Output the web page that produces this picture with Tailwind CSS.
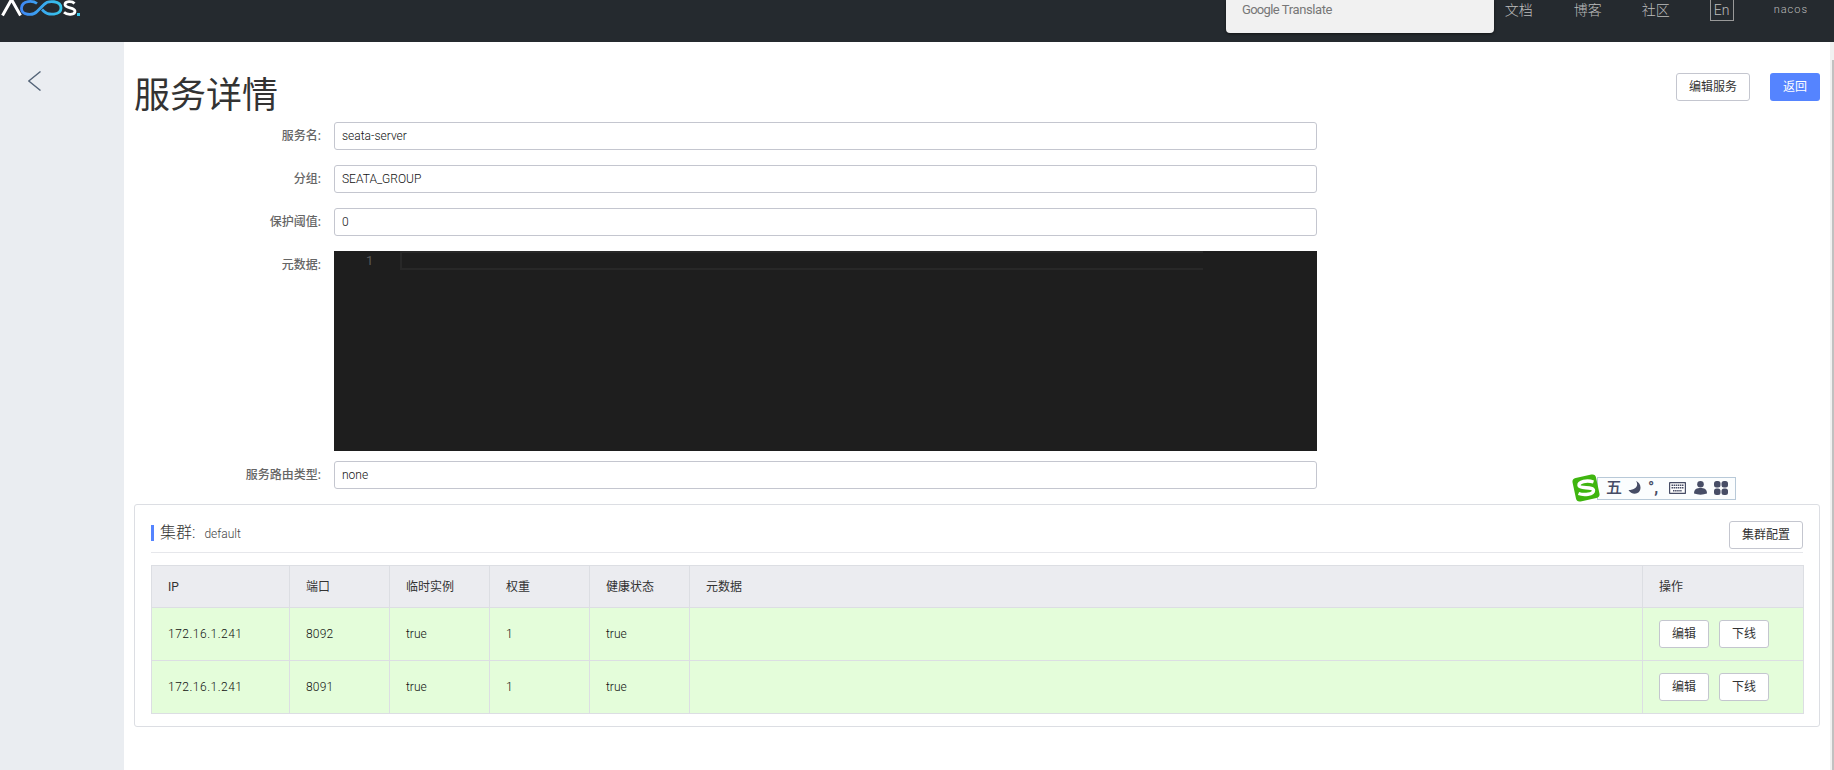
<!DOCTYPE html>
<html lang="zh-CN" class="overflow-hidden">
<head>
    <meta charset="UTF-8">
    <title>Nacos - 服务详情</title>
    <script src="https://cdn.jsdelivr.net/npm/@tailwindcss/browser@4"></script>
</head>

<body class="relative h-[770px] overflow-hidden bg-white text-xs text-[#333] font-['Roboto','Noto_Sans_CJK_SC',sans-serif]">

<!-- Header -->
<header class="relative flex h-[42px] items-start bg-[#252a2f] text-[#bdbdbd]">
    <!-- Logo -->
    <svg class="block" width="84" height="18" viewBox="0 0 84 18" fill="none">
        <defs>
            <linearGradient id="logoGrad" x1="20" y1="0" x2="62" y2="0" gradientUnits="userSpaceOnUse">
                <stop offset="0" stop-color="#3f86f5"/>
                <stop offset="1" stop-color="#36c6ea"/>
            </linearGradient>
        </defs>
        <path d="M2.500 15.500 L11.500 -0.500 L20.500 15.500" stroke="#fff" stroke-width="3"/>
        <path d="M37 3.500 C33 0.500 22 0 21.500 8 C21 15.500 33 16 37 11.500 L44 4.500 C48 0 61 0.500 61 8 C61 15.500 48 15.500 44 11.500 L42 9.500" stroke="url(#logoGrad)" stroke-width="2.800"/>
        <path d="M74.500 3.500 C72 0.800 65 1 65 4.600 C65 9 75 6.800 75 11.300 C75 15.200 67 15.200 64 12.300" stroke="#fff" stroke-width="2.800"/>
        <rect x="77" y="13" width="3" height="3" fill="#36c6ea"/>
    </svg>

    <!-- Nav -->
    <nav class="ml-auto flex items-start pr-[26px]">
        <a class="mt-[1px] text-sm leading-[18px] font-light">文档</a>
        <a class="ml-[41px] mt-[1px] text-sm leading-[18px] font-light">博客</a>
        <a class="ml-[40px] mt-[1px] text-sm leading-[18px] font-light">社区</a>
        <span class="ml-[40px] flex h-[21px] w-[24px] items-center justify-center border border-t-0 border-[#999] text-sm font-light">En</span>
        <span class="ml-[40px] mt-[1px] text-[11px] leading-[18px] font-light tracking-[1px]">nacos</span>
    </nav>

    <!-- Google translate panel -->
    <div class="absolute left-[1226px] top-0 flex h-[33px] w-[268px] items-start rounded-b bg-[#f1f1f1] pl-[16px] text-[13px] leading-[19px] text-[#777] shadow-[0_1px_3px_rgba(0,0,0,0.5)]">
        <span class="tracking-[-0.7px]">Google</span><span class="ml-[3px] tracking-[-0.4px]">Translate</span>
    </div>
</header>

<div class="flex h-[728px] overflow-hidden">
    <!-- Sidebar -->
    <aside class="w-[124px] shrink-0 bg-[#eaedf1] pl-[28px] pt-[29px]">
        <svg class="block" width="13" height="20" viewBox="0 0 13 20" fill="none">
            <path d="M12.500 0.500 L0.800 10 L12.500 19.500" stroke="#546478" stroke-width="1.400"/>
        </svg>
    </aside>

    <!-- Main -->
    <main class="min-w-0 flex-1 px-[10px] pt-[31px]">
        <div class="flex h-[49px] items-start justify-between">
            <h1 class="mt-[1px] text-4xl leading-[44px] font-normal text-[#333]">服务详情</h1>
            <div class="flex gap-[20px]">
                <button class="h-[28px] w-[74px] rounded-[3px] border border-[#c4c6cf] bg-white">编辑服务</button>
                <button class="h-[28px] w-[50px] rounded-[3px] bg-[#5584ff] text-white">返回</button>
            </div>
        </div>

        <!-- Form -->
        <form class="w-[1183px]">
            <div class="mb-[15px] flex items-center">
                <label class="w-[188px] pr-[1px] text-right font-medium text-[#666]">服务名:</label>
                <input class="ml-[12px] h-[28px] flex-1 rounded-[3px] border border-[#c4c6cf] px-[7px] font-light text-[#111]" value="seata-server" readonly>
            </div>
            <div class="mb-[15px] flex items-center">
                <label class="w-[188px] pr-[1px] text-right font-medium text-[#666]">分组:</label>
                <input class="ml-[12px] h-[28px] flex-1 rounded-[3px] border border-[#c4c6cf] px-[7px] font-light text-[#111]" value="SEATA_GROUP" readonly>
            </div>
            <div class="mb-[15px] flex items-center">
                <label class="w-[188px] pr-[1px] text-right font-medium text-[#666]">保护阈值:</label>
                <input class="ml-[12px] h-[28px] flex-1 rounded-[3px] border border-[#c4c6cf] px-[7px] font-light text-[#111]" value="0" readonly>
            </div>
            <div class="mb-[10px] flex items-start">
                <label class="w-[188px] pr-[1px] pt-[6px] text-right font-medium text-[#666]">元数据:</label>
                <!-- Editor -->
                <div class="ml-[12px] flex h-[200px] flex-1 items-start bg-[#1e1e1e]">
                    <span class="w-[66px] pl-[32px] text-[13px] leading-[19px] text-[#5a5a5a]">1</span>
                    <div class="h-[19px] w-[803px] border-y-2 border-l-2 border-[#282828]"></div>
                </div>
            </div>
            <div class="flex items-center">
                <label class="w-[188px] pr-[1px] text-right font-medium text-[#666]">服务路由类型:</label>
                <input class="ml-[12px] h-[28px] flex-1 rounded-[3px] border border-[#c4c6cf] px-[7px] font-light text-[#111]" value="none" readonly>
            </div>
        </form>

        <!-- Cluster card -->
        <section class="mt-[15px] h-[223px] rounded-[3px] border border-[#dcdee3] px-[16px] pt-[16px]">
            <div class="flex h-[32px] items-start justify-between border-b border-[#e6e7eb]">
                <div class="mt-[4px] flex h-[16px] items-center border-l-[3px] border-[#5584ff] pl-[6px]">
                    <span class="text-base font-light text-[#333]">集群:</span>
                    <span class="ml-[9px] mt-[2px] font-light text-[#444]">default</span>
                </div>
                <button class="h-[28px] w-[74px] rounded-[3px] border border-[#c4c6cf] bg-white">集群配置</button>
            </div>

            <table class="mt-[12px] w-[1652px] table-fixed border-collapse">
                <colgroup>
                    <col class="w-[138px]"><col class="w-[100px]"><col class="w-[100px]"><col class="w-[100px]"><col class="w-[100px]"><col class="w-[953px]"><col class="w-[161px]">
                </colgroup>
                <thead>
                    <tr class="h-[42px] bg-[#ebecf0] text-left">
                        <th class="border border-[#dcdee3] pl-[16px] font-normal">IP</th>
                        <th class="border border-[#dcdee3] pl-[16px] font-normal">端口</th>
                        <th class="border border-[#dcdee3] pl-[16px] font-normal">临时实例</th>
                        <th class="border border-[#dcdee3] pl-[16px] font-normal">权重</th>
                        <th class="border border-[#dcdee3] pl-[16px] font-normal">健康状态</th>
                        <th class="border border-[#dcdee3] pl-[16px] font-normal">元数据</th>
                        <th class="border border-[#dcdee3] pl-[16px] font-normal">操作</th>
                    </tr>
                </thead>
                <tbody class="font-light text-[#111]">
                    <tr class="h-[53px] bg-[#e4fdda]">
                        <td class="border border-[#dcdee3] pl-[16px] tracking-[0.5px]">172.16.1.241</td>
                        <td class="border border-[#dcdee3] pl-[16px] tracking-[0.2px]">8092</td>
                        <td class="border border-[#dcdee3] pl-[16px]">true</td>
                        <td class="border border-[#dcdee3] pl-[16px]">1</td>
                        <td class="border border-[#dcdee3] pl-[16px]">true</td>
                        <td class="border border-[#dcdee3] pl-[16px]"></td>
                        <td class="border border-[#dcdee3] pl-[16px]">
                            <div class="flex gap-[10px] font-normal text-[#333]">
                                <button class="h-[28px] w-[50px] rounded-[3px] border border-[#c4c6cf] bg-white">编辑</button>
                                <button class="h-[28px] w-[50px] rounded-[3px] border border-[#c4c6cf] bg-white">下线</button>
                            </div>
                        </td>
                    </tr>
                    <tr class="h-[53px] bg-[#e4fdda]">
                        <td class="border border-[#dcdee3] pl-[16px] tracking-[0.5px]">172.16.1.241</td>
                        <td class="border border-[#dcdee3] pl-[16px] tracking-[0.2px]">8091</td>
                        <td class="border border-[#dcdee3] pl-[16px]">true</td>
                        <td class="border border-[#dcdee3] pl-[16px]">1</td>
                        <td class="border border-[#dcdee3] pl-[16px]">true</td>
                        <td class="border border-[#dcdee3] pl-[16px]"></td>
                        <td class="border border-[#dcdee3] pl-[16px]">
                            <div class="flex gap-[10px] font-normal text-[#333]">
                                <button class="h-[28px] w-[50px] rounded-[3px] border border-[#c4c6cf] bg-white">编辑</button>
                                <button class="h-[28px] w-[50px] rounded-[3px] border border-[#c4c6cf] bg-white">下线</button>
                            </div>
                        </td>
                    </tr>
                </tbody>
            </table>
        </section>
    </main>

    <!-- Scrollbar -->
    <div class="flex w-[4px] shrink-0 justify-end bg-[#f1f1f1] pt-[18px]">
        <div class="w-[2px] bg-[#c1c1c1]"></div>
    </div>
</div>

<!-- Sogou IME toolbar floats over the page -->
<div class="absolute left-[1572px] top-[474px] flex h-[28px] items-center">
    <svg class="relative z-10 block" width="28" height="28" viewBox="0 0 28 28">
        <rect x="2" y="2" width="24" height="24" rx="4" transform="rotate(-12 14 14)" fill="#3fb50f"/>
        <path d="M21.500 8 C15 6 6.500 7.500 7 11.500 C7.500 15 21.500 12.500 21.500 16.500 C21.500 20.500 12 21.500 6.500 19.500" fill="none" stroke="#fff" stroke-width="3.400"/>
    </svg>
    <div class="-ml-[3px] flex h-[23px] w-[139px] items-center border border-[#b8c9d8] bg-[#fbfdfe] pl-[8px] text-[#474d66]">
        <span class="text-base font-medium leading-none">五</span>
        <svg class="ml-[6px] block" width="13" height="14" viewBox="0 0 13 14"><path d="M8 0 C11 4 8 9 0.500 9 C3 14 12.500 14.500 12.500 6.500 C12.500 3.500 10.500 1 8 0 Z" fill="#474d66"/></svg>
        <span class="ml-[7px] w-[14px] text-base font-bold leading-none">°,</span>
        <svg class="ml-[7px] block" width="17" height="12" viewBox="0 0 17 12">
            <rect x="0.500" y="0.500" width="16" height="11" rx="1" fill="#fff" stroke="#474d66" stroke-width="1.400"/>
            <path d="M2.500 3.300 H14.500 M2.500 5.800 H14.500 M4 8.800 H13" stroke="#474d66" stroke-width="1.600" stroke-dasharray="1.500 0.600"/>
        </svg>
        <svg class="ml-[8px] block" width="13" height="14" viewBox="0 0 13 14">
            <circle cx="6.500" cy="3.300" r="3.300" fill="#474d66"/>
            <path d="M0 12.500 C0 8 3 7 6.500 7 C10 7 13 8 13 12.500 C9 14 4 14 0 12.500 Z" fill="#474d66"/>
        </svg>
        <svg class="ml-[7px] block" width="14" height="14" viewBox="0 0 14 14" fill="#474d66">
            <rect x="0" y="0" width="6.500" height="6.500" rx="2.500"/><rect x="7.500" y="0" width="6.500" height="6.500" rx="2.500"/>
            <rect x="0" y="7.500" width="6.500" height="6.500" rx="2.500"/><rect x="7.500" y="7.500" width="6.500" height="6.500" rx="2.500"/>
        </svg>
    </div>
</div>

</body>
</html>
